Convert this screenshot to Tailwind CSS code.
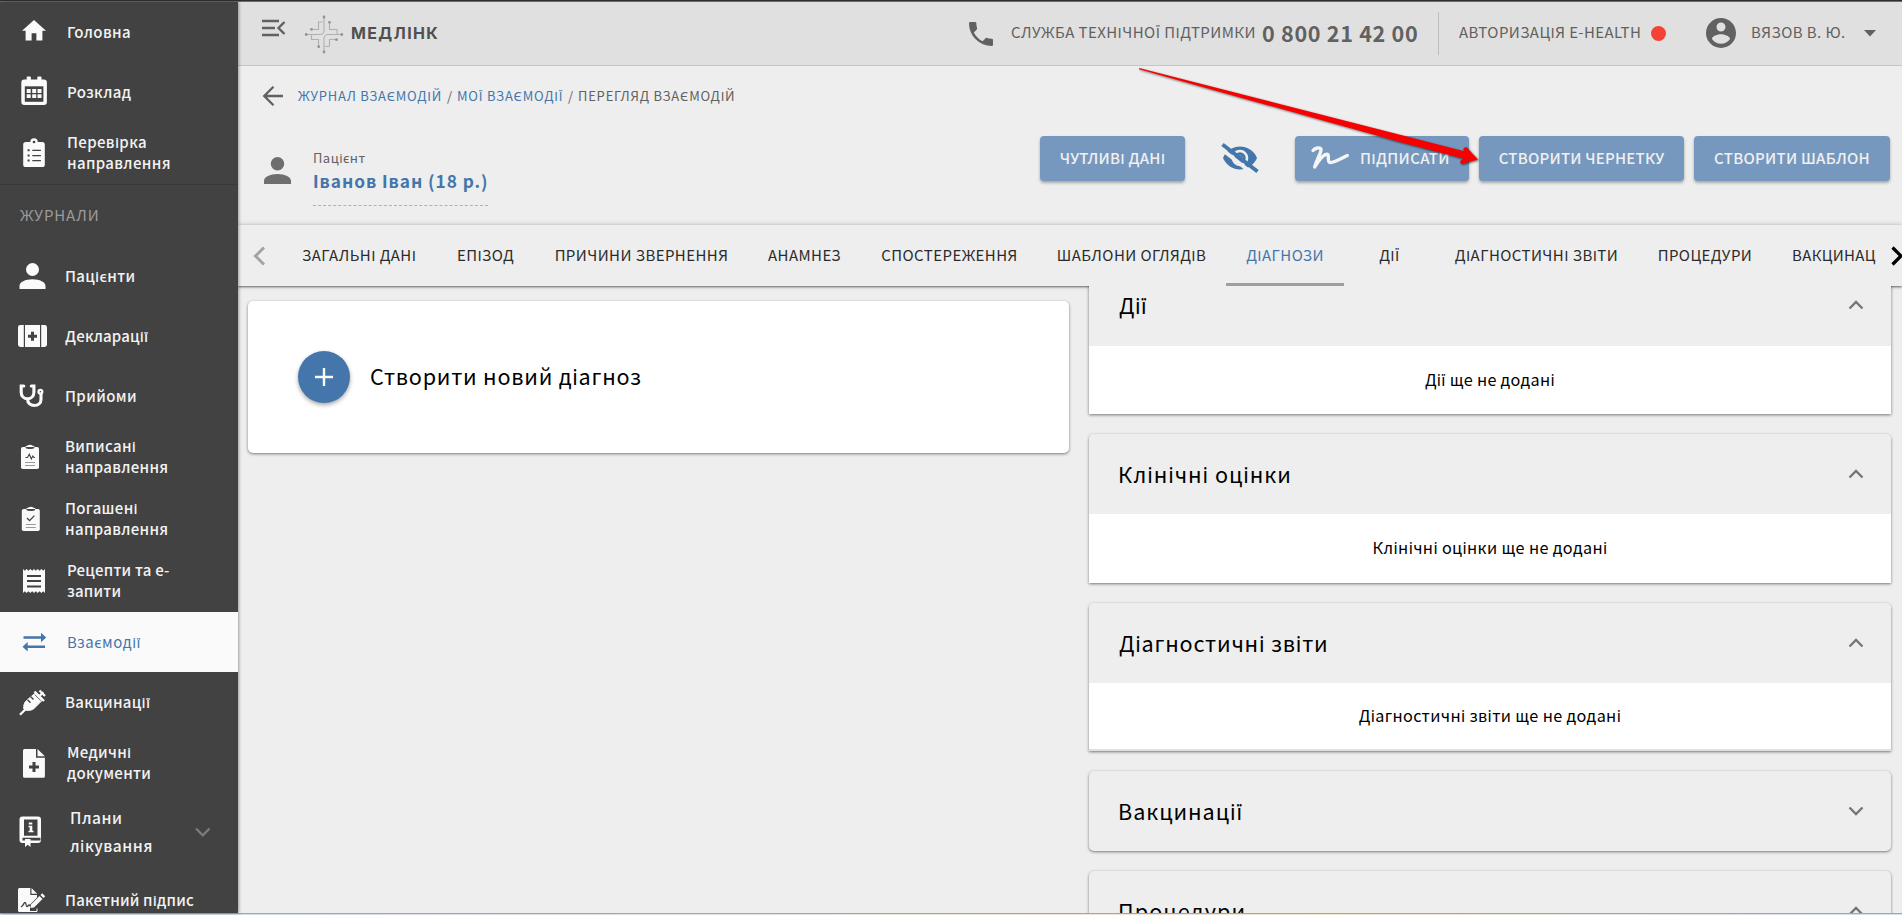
<!DOCTYPE html>
<html lang="uk">
<head>
<meta charset="utf-8">
<title>Медлінк</title>
<script src="https://cdn.jsdelivr.net/npm/@tailwindcss/browser@4"></script>
</head>
<body class="relative flex h-[915px] w-[1902px] flex-col overflow-hidden bg-[#eeeeee] font-['Noto_Sans_CJK_SC','Noto_Sans',sans-serif] text-[15px] text-black">
<div class="h-[2px] shrink-0 border-b border-[#6b6b6b] bg-[#2f2f2f]"></div>
<div class="flex h-[911px] shrink-0">

<!-- Sidebar -->
<nav class="z-10 flex w-[238px] shrink-0 flex-col overflow-hidden bg-[#424242] font-medium leading-[21px] text-[#f2f2f2] shadow-[1px_0_3px_rgba(0,0,0,0.35)] [&_a>span]:-mt-[2px]">
  <a class="flex h-[60px] shrink-0 items-center"><svg class="mr-[7px] shrink-0" width="60" height="60" viewBox="0 2 60 60" fill="#fafafa"><path transform="translate(19.6 16.4) scale(1.2)" d="M10,20V14H14V20H19V12H22L12,3L2,12H5V20H10Z"/></svg><span class="tracking-[0.37px]">Головна</span></a>
  <a class="flex h-[60px] shrink-0 items-center"><svg class="mr-[7px] shrink-0" width="60" height="60" viewBox="0 62 60 60" fill="#fafafa"><rect x="21.3" y="79.5" width="25.6" height="25.5" rx="3"/><rect x="26.7" y="76.5" width="4.2" height="6" rx="1"/><rect x="37.3" y="76.5" width="4.2" height="6" rx="1"/><path d="M24.8 86.3h18.6v15.5H24.8z" fill="#424242"/><path d="M26.7 89h4v3.9h-4zM32.2 89h4v3.9h-4zM37.5 89h4v3.9h-4zM26.7 94.2h4v3.9h-4zM32.2 94.2h4v3.9h-4zM37.5 94.2h4v3.9h-4z"/></svg><span class="tracking-[0.37px]">Розклад</span></a>
  <a class="flex h-[62px] shrink-0 items-center"><svg class="mr-[7px] shrink-0" width="60" height="62" viewBox="0 122 60 62" fill="#fafafa"><rect x="23.2" y="142" width="21.6" height="25" rx="2.6"/><circle cx="34" cy="142" r="3.7"/><circle cx="34" cy="142" r="1.3" fill="#424242"/><path d="M27.6 149.2h2v2h-2zM27.6 154.5h2v2h-2zM27.6 159.6h2v2h-2zM32.3 149.7h8.6v1.2h-8.6zM32.3 155h8.6v1.2h-8.6zM32.3 160.1h8.6v1.2h-8.6z" fill="#424242"/></svg><span class="tracking-[0.36px]">Перевірка<br>направлення</span></a>
  <div class="flex h-[62px] shrink-0 items-center border-t border-[#393939] pb-[2px] pl-[20px] font-normal tracking-[0.9px] text-[#9b9b9b]">ЖУРНАЛИ</div>
  <a class="flex h-[60px] shrink-0 items-center"><svg class="mr-[5px] shrink-0" width="60" height="60" viewBox="0 246 60 60" fill="#fafafa"><path transform="translate(13 256.5) scale(1.625)" d="M12,4A4,4 0 0,1 16,8A4,4 0 0,1 12,12A4,4 0 0,1 8,8A4,4 0 0,1 12,4M12,14C16.42,14 20,15.79 20,18V20H4V18C4,15.79 7.58,14 12,14Z"/></svg><span class="tracking-[0.31px]">Пацієнти</span></a>
  <a class="flex h-[60px] shrink-0 items-center"><svg class="mr-[5px] shrink-0" width="60" height="60" viewBox="0 306 60 60" fill="#fafafa"><rect x="18" y="325" width="29" height="22" rx="2.4"/><path d="M23.8 325h1.2v22h-1.2zM40 325h1.2v22H40zM31 331.7h3v3h3v3h-3v3h-3v-3h-3v-3h3z" fill="#424242"/></svg><span class="tracking-[0.16px]">Декларації</span></a>
  <a class="flex h-[60px] shrink-0 items-center"><svg class="mr-[5px] shrink-0" width="60" height="60" viewBox="0 366 60 60" fill="none" stroke="#fafafa" stroke-width="3.1" stroke-linecap="round"><path d="M23.8 386h-2.6v6.2c0 4 2.8 6.600 6.300 6.600s6.400-2.600 6.400-6.600V386h-2.600M27.500 399.500c.3 3.600 3 6 6.800 6s6.700-2.400 6.700-6V394"/><circle cx="40.400" cy="391.700" r="1.900" stroke-width="2.300"/></svg><span class="tracking-[0.38px]">Прийоми</span></a>
  <a class="flex h-[62px] shrink-0 items-center"><svg class="mr-[5px] shrink-0" width="60" height="62" viewBox="0 426 60 62" fill="#fafafa"><rect x="21" y="447" width="18" height="22" rx="1.800"/><path d="M25.500 447.800v-1.500c1.500 0 2.500-1.500 4.500-1.500s3 1.500 4.500 1.500v1.500z"/><path d="M25.800 447.600c1 1.200 7.400 1.200 8.400 0z" fill="#424242" stroke="#424242"/><path d="M25.500 457.500h2l1.800-3.200 2 4.700 1.500-3 1.200 1.500h1" fill="none" stroke="#424242" stroke-width="1.100"/><path d="M25 462.500h10M25 465.500h10" stroke="#9a9a9a"/></svg><span class="tracking-[0.33px]">Виписані<br>направлення</span></a>
  <a class="flex h-[62px] shrink-0 items-center"><svg class="mr-[5px] shrink-0" width="60" height="62" viewBox="0 488 60 62" fill="#fafafa"><rect x="21.800" y="509" width="18" height="22" rx="1.800"/><path d="M26.300 509.800v-1.500c1.500 0 2.500-1.500 4.500-1.500s3 1.500 4.500 1.500v1.500z"/><path d="M26.600 509.600c1 1.200 7.400 1.200 8.400 0z" fill="#424242" stroke="#424242"/><path d="M27 518l2.600 2.600 4.800-5" fill="none" stroke="#424242" stroke-width="1.300"/><path d="M25.800 524.500h10M25.800 527.500h10" stroke="#9a9a9a"/></svg><span class="tracking-[0.33px]">Погашені<br>направлення</span></a>
  <a class="flex h-[62px] shrink-0 items-center"><svg class="mr-[7px] shrink-0" width="60" height="62" viewBox="0 550 60 62" fill="#fafafa"><path d="M23 569l1.800 1.700 1.800-1.700 1.900 1.700 1.800-1.700 1.900 1.700L34 569l1.800 1.700 1.900-1.700 1.800 1.700 1.900-1.700 1.800 1.700L45 569v24l-1.800-1.700-1.800 1.700-1.900-1.700-1.800 1.700-1.900-1.700L34 593l-1.800-1.700-1.900 1.700-1.800-1.700-1.900 1.700-1.800-1.700L23 593z"/><path d="M27 576h14M27 581h14M27 586.500h14" stroke="#424242" stroke-width="2.200"/></svg><span class="tracking-[0.21px]">Рецепти та е-<br>запити</span></a>
  <a class="flex h-[60px] shrink-0 items-center bg-[#fafafa] font-normal text-[#4476ab]"><svg class="mr-[7px] shrink-0" width="60" height="60" viewBox="0 612 60 60" fill="#4476ab"><path d="M23.500 636.200H41v-3.400l5.200 4.700-5.200 4.700v-3.400H23.500zM45 645.400H27.700V642l-5.200 4.700 5.200 4.700V648H45z"/></svg><span class="tracking-[0.49px]">Взаємодії</span></a>
  <a class="flex h-[60px] shrink-0 items-center"><svg class="mr-[5px] shrink-0" width="60" height="60" viewBox="0 672 60 60" fill="none" stroke="#fafafa"><path d="M26.500 700.500l9.500-8 7 7-9.500 9.500c-1 1-5.500 2-8.500 1l-1.200-1.200c-.5-3 .5-6.500 2.700-8.300z" fill="#fafafa"/><path d="M20 714.800l6-6M39.500 696l3.800-3.800" stroke-width="2.300"/><path d="M34.500 691.500l9.500 9.500M39.500 690.500l5.500 5.500" stroke-width="2.300"/><path d="M30.500 696.500l3 3M27.500 699.800l3 3" stroke="#424242" stroke-width="1.400"/><path d="M34.800 694.700l6 6" stroke="#424242" stroke-width="0.800"/></svg><span class="tracking-[0.29px]">Вакцинації</span></a>
  <a class="flex h-[62px] shrink-0 items-center"><svg class="mr-[7px] shrink-0" width="60" height="62" viewBox="0 732 60 62" fill="#fafafa"><path d="M24.500 749H36v8.700h8.900V776.300a1.500 1.500 0 0 1-1.500 1.500H24.500a1.500 1.500 0 0 1-1.500-1.500V750.500a1.500 1.500 0 0 1 1.500-1.500zM37.500 749l7.400 7.300h-7.400z"/><path d="M32.500 762h3v3.500H39v3h-3.500v3.500h-3v-3.500H29v-3h3.500z" fill="#424242"/></svg><span class="tracking-[0.3px]">Медичні<br>документи</span></a>
  <a class="flex h-[76px] shrink-0 items-center leading-[28px]"><svg class="mr-[10px] shrink-0" width="60" height="76" viewBox="0 794 60 76" fill="#fafafa"><rect x="19.500" y="816.500" width="21.500" height="26.500" rx="3"/><path d="M24 819.500h13.500v16.200H24zM22.500 837.800H40.500v2.700H22.500z" fill="#424242"/><path d="M28.800 822.500h3.500v2h-3.500zM28.500 825.800h3.800v5h1.200v1.500h-5v-1.500h1.200v-3.500h-1.200zM25 839h5.500v8l-2.700-2.300-2.800 2.300z"/></svg><span class="w-[115px] text-[15.600px] tracking-[0.55px]">Плани<br>лікування</span><svg class="ml-[9px]" width="18" height="12" viewBox="0 0 18 12" fill="none" stroke="#7b7b7b" stroke-width="2.300"><path d="M2 2.500l6.800 6.800 6.800-6.800"/></svg></a>
  <a class="flex h-[60px] shrink-0 items-center"><svg class="mr-[5px] shrink-0" width="60" height="60" viewBox="0 870 60 60" fill="#fafafa"><path d="M19.500 888h10.800v7H37v2.500l-7 7.200V912H19.500a1.500 1.500 0 0 1-1.500-1.500v-21a1.500 1.500 0 0 1 1.500-1.500zM31.500 888l5.700 5.700h-5.700z"/><path d="M21 907c3-1.500 2.500-4.500 4-4.500 1.600 0 .5 4 2 4s1-1.500 2-1.500 1 1.500 2.500 1.500" fill="none" stroke="#424242" stroke-width="1.300"/><path d="M31 904.500l8.500-8.500 3 3-8.500 8.500-3.600.6zM40.500 895l1.700-1.700 3 3-1.700 1.700z"/><path d="M30 911.500h7v-3" stroke="#fafafa" fill="none"/></svg><span class="tracking-[0.19px]">Пакетний підпис</span></a>
</nav>

<main class="flex w-[1664px] flex-col">
  <!-- Top bar -->
  <header class="flex h-[64px] shrink-0 items-center border-b border-[#c6c6c6] bg-[#e0e0e0] pl-[23px] text-[#616161]">
    <svg class="-mt-[11px] shrink-0" width="25" height="20" viewBox="0 0 25 20" fill="none" stroke="#616161" stroke-width="2.400"><path d="M1 3h17M1 10h13M1 17h17M23.500 4l-6 6 6 6"/></svg>
    <svg class="ml-[18px] shrink-0" width="40" height="40" viewBox="304 13 40 40" fill="none" stroke="#b0b0b0" stroke-width="1.100"><path d="M324 16v13.500a4 4 0 0 1-4 4h-14M342 33.500h-14a4 4 0 0 0-4 4v13.500M320.500 21h-2v7.500h-7M318.500 21h4M329.500 21.500v7h7.500v5M311.500 33.500v5h7v7M329.500 45v-6.500h7M325 45.500h4.500"/><g fill="#949494" stroke="none"><circle cx="324" cy="16" r="1.400"/><circle cx="324" cy="51" r="1.400"/><circle cx="306.200" cy="33.500" r="1.400"/><circle cx="341.800" cy="33.500" r="1.400"/><circle cx="311.500" cy="28.300" r="1.400"/><circle cx="329.500" cy="21.300" r="1.400"/><circle cx="336.500" cy="38.700" r="1.400"/><circle cx="318.700" cy="45.700" r="1.400"/></g></svg>
    <span class="-mt-[2px] ml-[7px] w-[618px] font-['Inter',sans-serif] text-[16px] font-bold tracking-[1.350px] text-[#505050]">МЕДЛІНК</span>
    <svg class="shrink-0" width="24" height="24" viewBox="3 3 18 18" fill="#616161"><path d="M6.620,10.790C8.060,13.620 10.380,15.940 13.210,17.380L15.410,15.180C15.690,14.900 16.080,14.820 16.430,14.930C17.550,15.300 18.750,15.500 20,15.500A1,1 0 0,1 21,16.500V20A1,1 0 0,1 20,21A17,17 0 0,1 3,4A1,1 0 0,1 4,3H7.500A1,1 0 0,1 8.500,4C8.500,5.250 8.700,6.450 9.070,7.570C9.180,7.920 9.100,8.310 8.820,8.590L6.620,10.790Z"/></svg>
    <span class="-mt-[2px] ml-[18px] w-[251px] whitespace-nowrap tracking-[0.44px]">СЛУЖБА ТЕХНІЧНОЇ ПІДТРИМКИ</span>
    <span class="-mt-px w-[176px] whitespace-nowrap text-[21.600px] font-bold tracking-[0.67px]">0 800 21 42 00</span>
    <span class="h-[43px] w-px bg-[#bdbdbd]"></span>
    <span class="-mt-[2px] ml-[20px] w-[192px] whitespace-nowrap tracking-[0.4px]">АВТОРИЗАЦІЯ E-HEALTH</span>
    <span class="size-[15px] rounded-full bg-[#f44336]"></span>
    <svg class="-mt-[2px] ml-[40px] shrink-0" width="30" height="30" viewBox="2 2 20 20" fill="#616161"><path d="M12,19.200C9.500,19.200 7.290,17.920 6,16C6.030,14 10,12.900 12,12.900C14,12.900 17.970,14 18,16C16.710,17.920 14.500,19.200 12,19.200M12,5A3,3 0 0,1 15,8A3,3 0 0,1 12,11A3,3 0 0,1 9,8A3,3 0 0,1 12,5M12,2A10,10 0 0,0 2,12A10,10 0 0,0 12,22A10,10 0 0,0 22,12C22,6.470 17.500,2 12,2Z"/></svg>
    <span class="-mt-[2px] ml-[15px] w-[113px] whitespace-nowrap tracking-[0.42px]">ВЯЗОВ В. Ю.</span>
    <svg width="12" height="7" viewBox="0 0 12 7" fill="#616161"><path d="M0 0h12L6 6.500z"/></svg>
  </header>

  <!-- Breadcrumbs -->
  <div class="flex h-[60px] shrink-0 items-center pl-[24px] text-[13px] text-[#616161]">
    <svg width="22" height="22" viewBox="0 0 22 22" fill="none" stroke="#616161" stroke-width="2.300"><path d="M21 11H2.500M11.500 1.700L2.200 11l9.300 9.300"/></svg>
    <span class="ml-[14px] w-[149px] whitespace-nowrap tracking-[0.76px] text-[#4476ab]">ЖУРНАЛ ВЗАЄМОДІЙ</span><span class="w-[10px]">/</span>
    <span class="w-[111px] whitespace-nowrap tracking-[0.8px] text-[#4476ab]">МОЇ ВЗАЄМОДІЇ</span><span class="w-[10px]">/</span>
    <span class="whitespace-nowrap tracking-[0.79px]">ПЕРЕГЛЯД ВЗАЄМОДІЙ</span>
  </div>

  <!-- Patient and actions -->
  <div class="flex h-[99px] shrink-0 items-start pl-[26px]">
    <svg class="mt-[31px] shrink-0" width="27" height="27" viewBox="4 4 16 16" fill="#6e6e6e"><path d="M12,4A4,4 0 0,1 16,8A4,4 0 0,1 12,12A4,4 0 0,1 8,8A4,4 0 0,1 12,4M12,14C16.420,14 20,15.790 20,18V20H4V18C4,15.790 7.580,14 12,14Z"/></svg>
    <div class="ml-[22px] mt-[20px] h-[60px] w-[175px] border-b border-dashed border-[#b0b0b0]">
      <div class="h-[23px] text-[13px] leading-[23px] tracking-[0.47px] text-[#616161]">Пацієнт</div>
      <div class="h-[24px] whitespace-nowrap text-[17.300px] font-bold leading-[24px] tracking-[0.95px] text-[#4476ab]">Іванов Іван (18 р.)</div>
    </div>
    <div class="ml-[552px] mt-[10px] flex items-center font-medium leading-[43px] text-[#f0f0f0]">
      <button class="h-[45px] w-[145px] rounded-[4px] bg-[#7698bf] pb-[2px] tracking-[0.24px] shadow-[0_2px_3px_rgba(0,0,0,0.3)]">ЧУТЛИВІ ДАНІ</button>
      <svg class="-mt-[2px] ml-[35px] shrink-0" width="40" height="34" viewBox="1220 141 40 34" fill="none" stroke="#4476ab"><path d="M1223 158c3-7.500 10-11.500 17-11.500s14 4 17 11.500c-3 7-10 11.500-17 11.500s-14-4.500-17-11.500z" fill="#4476ab" stroke="none"/><circle cx="1240" cy="158" r="7" stroke="#eee" stroke-width="2.600"/><path d="M1240 155.500a3 3 0 0 0 3 2.500" stroke="#eee" stroke-width="1"/><path d="M1221.800 149.300L1253 174" stroke="#eee" stroke-width="4"/><path d="M1222.500 144.500l35 27" stroke-width="3.800"/></svg>
      <button class="ml-[35px] flex h-[45px] w-[174px] items-center rounded-[4px] bg-[#7698bf] pb-[2px] pl-[15px] tracking-[0.35px] shadow-[0_2px_3px_rgba(0,0,0,0.3)]"><svg class="mr-[10px] shrink-0" width="40" height="26" viewBox="1310 145 40 26" fill="none" stroke="#f5f5f5" stroke-width="3.400" stroke-linecap="round" stroke-linejoin="round"><path d="M1313 150.500c2-2.500 7.500-3.800 8-1 .4 3-4 9-6.300 17.500 3-5 8.500-12.800 12.300-12.800 3 0-.5 7.500 3 8.300 3 .7 9-2.700 17.300-7"/></svg>ПІДПИСАТИ</button>
      <button class="ml-[10px] h-[45px] w-[205px] rounded-[4px] bg-[#7698bf] pb-[2px] tracking-[0.23px] shadow-[0_2px_3px_rgba(0,0,0,0.3)]">СТВОРИТИ ЧЕРНЕТКУ</button>
      <button class="ml-[10px] h-[45px] w-[196px] rounded-[4px] bg-[#7698bf] pb-[2px] tracking-[0.27px] shadow-[0_2px_3px_rgba(0,0,0,0.3)]">СТВОРИТИ ШАБЛОН</button>
    </div>
  </div>

  <!-- Tabs -->
  <div class="flex h-[61px] shrink-0 items-center bg-[#eeeeee] text-center leading-[60px] tracking-[0.43px] text-[#2b2b2b] shadow-[0_1px_2px_rgba(0,0,0,0.5),0_0_5px_rgba(0,0,0,0.2)]">
    <svg class="ml-[15px] mr-[30px] shrink-0" width="13" height="20" viewBox="0 0 13 20" fill="none" stroke="#a3a3a3" stroke-width="3"><path d="M11 1.500L2.500 10l8.500 8.500"/></svg>
    <div class="flex w-[1580px] shrink-0 overflow-hidden whitespace-nowrap">
      <a class="w-[127px] pl-[6px] text-left">ЗАГАЛЬНІ ДАНІ</a>
      <a class="w-[125px]">ЕПІЗОД</a>
      <a class="w-[187px]">ПРИЧИНИ ЗВЕРНЕННЯ</a>
      <a class="w-[139px]">АНАМНЕЗ</a>
      <a class="w-[151px]">СПОСТЕРЕЖЕННЯ</a>
      <a class="w-[201px] pl-[12px]">ШАБЛОНИ ОГЛЯДІВ</a>
      <a class="h-[61px] w-[118px] border-b-[3px] border-[#9e9e9e] text-[#4476ab]">ДІАГНОЗИ</a>
      <a class="w-[91px]">ДІЇ</a>
      <a class="w-[203px]">ДІАГНОСТИЧНІ ЗВІТИ</a>
      <a class="w-[134px]">ПРОЦЕДУРИ</a>
      <a class="pl-[20px] tracking-[0.33px]">ВАКЦИНАЦ</a>
    </div>
    <svg class="ml-[15px] shrink-0" width="13" height="20" viewBox="0 0 13 20" fill="none" stroke="#000" stroke-width="3.200"><path d="M1.500 1.500L10 10l-8.500 8.500"/></svg>
  </div>

  <!-- Content -->
  <div class="relative flex h-[627px] shrink-0 items-start overflow-hidden">
    <section class="ml-[10px] mt-[15px] flex h-[152px] w-[821px] items-center rounded-[5px] bg-white pl-[50px] shadow-[0_1px_3px_rgba(0,0,0,0.5)]">
      <span class="flex size-[52px] items-center justify-center rounded-full bg-[#4476ab] shadow-[0_2px_4px_rgba(0,0,0,0.35)]"><svg width="20" height="20" viewBox="0 0 20 20" stroke="#fafafa" stroke-width="2.400"><path d="M10 1v18M1 10h18"/></svg></span>
      <span class="-mt-[2px] ml-[20px] text-[21.600px] leading-[30px] tracking-[0.77px]">Створити новий діагноз</span>
    </section>
    <div class="-mt-[21px] ml-[20px] flex w-[802px] flex-col gap-[20px]">
      <section class="shadow-[0_1px_3px_rgba(0,0,0,0.5)]">
        <div class="flex h-[81px] items-center justify-between bg-[#eeeeee] pb-px pl-[30px] pr-[27px] text-[21.600px] leading-[30px] tracking-[0.53px]">Дії<svg width="16" height="10" viewBox="0 0 16 10" fill="none" stroke="#757575" stroke-width="2.300"><path d="M1.500 8.500L8 2l6.500 6.500"/></svg></div>
        <div class="flex h-[68px] items-center justify-center bg-white pb-[2px] text-[16.200px] tracking-[0.3px]">Дії ще не додані</div>
      </section>
      <section class="rounded-t-[5px] shadow-[0_1px_3px_rgba(0,0,0,0.5)]">
        <div class="flex h-[80px] items-center justify-between rounded-t-[5px] bg-[#eeeeee] pb-px pl-[29px] pr-[27px] text-[21.600px] leading-[30px] tracking-[0.95px]">Клінічні оцінки<svg width="16" height="10" viewBox="0 0 16 10" fill="none" stroke="#757575" stroke-width="2.300"><path d="M1.500 8.500L8 2l6.500 6.500"/></svg></div>
        <div class="flex h-[69px] items-center justify-center bg-white pb-[3px] text-[16.200px] tracking-[0.37px]">Клінічні оцінки ще не додані</div>
      </section>
      <section class="rounded-t-[5px] shadow-[0_1px_3px_rgba(0,0,0,0.5)]">
        <div class="flex h-[80px] items-center justify-between rounded-t-[5px] bg-[#eeeeee] pb-px pl-[30px] pr-[27px] text-[21.600px] leading-[30px] tracking-[0.8px]">Діагностичні звіти<svg width="16" height="10" viewBox="0 0 16 10" fill="none" stroke="#757575" stroke-width="2.300"><path d="M1.500 8.500L8 2l6.500 6.500"/></svg></div>
        <div class="flex h-[68px] items-center justify-center border-b-2 border-[#e0e0e0] bg-white pb-px text-[16.200px] tracking-[0.35px]">Діагностичні звіти ще не додані</div>
      </section>
      <section class="flex h-[80px] items-center justify-between rounded-[5px] bg-[#eeeeee] pb-px pl-[29px] pr-[27px] text-[21.600px] leading-[30px] tracking-[0.94px] shadow-[0_1px_3px_rgba(0,0,0,0.5)]">Вакцинації<svg width="16" height="10" viewBox="0 0 16 10" fill="none" stroke="#757575" stroke-width="2.300"><path d="M1.500 1.500L8 8l6.500-6.500"/></svg></section>
      <section class="flex h-[80px] items-center justify-between rounded-[5px] bg-[#eeeeee] pb-px pl-[29px] pr-[27px] text-[21.600px] leading-[30px] tracking-[1.100px] shadow-[0_1px_3px_rgba(0,0,0,0.5)]">Процедури<svg width="16" height="10" viewBox="0 0 16 10" fill="none" stroke="#757575" stroke-width="2.300"><path d="M1.500 8.500L8 2l6.500 6.500"/></svg></section>
    </div>
  </div>
</main>
</div>
<div class="h-[2px] shrink-0 border-t border-[#aaa5a5] bg-linear-to-r from-[#cddaf0] via-[#f3e6cf] via-70% to-[#d3def0]"></div>

<!-- Pointer arrow over the action buttons -->
<svg class="absolute left-0 top-0 z-20 drop-shadow-[1px_1px_1px_rgba(0,0,0,0.6)]" width="1902" height="200" viewBox="0 0 1902 200" fill="#f90000"><path d="M1139 68L1400 134.800L1467 152L1463.500 150.500Q1462.500 147 1466.500 147.300L1478 159.500L1461.500 164Q1459 162.500 1461 160.500L1463 158.500L1400 142L1139 69.200z"/></svg>
</body>
</html>
